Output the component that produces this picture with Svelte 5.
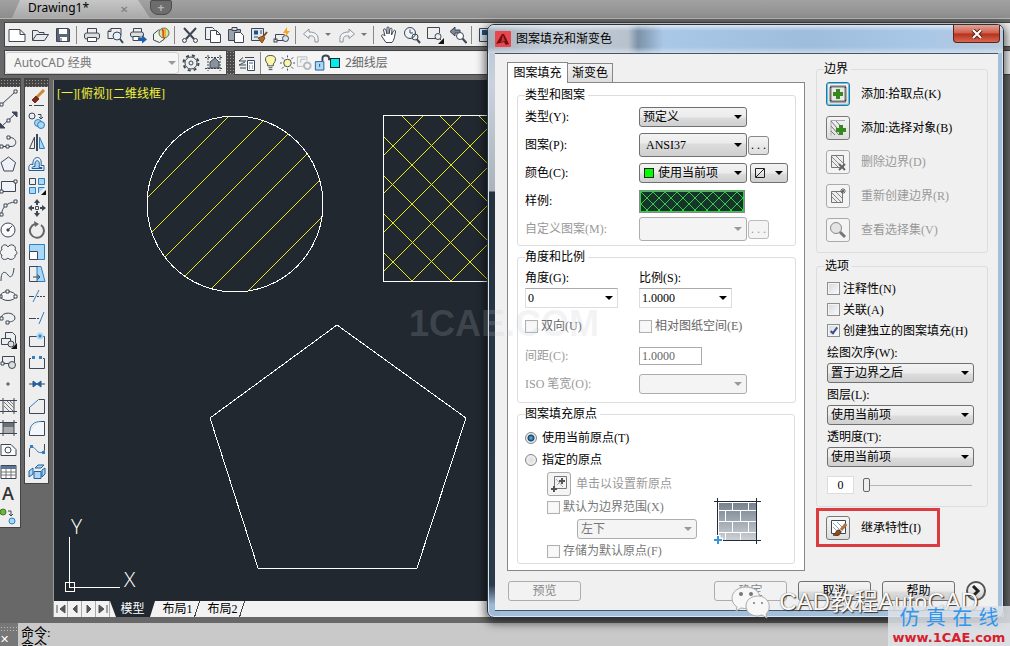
<script lang="ts">
  type Tool = { name: string; art: string };

  const B = '#2f7fc1';
  const L = '#a9d8f5';

  // Inner markup of the 18x18 toolbar glyphs.
  const standard: (Tool | 'sep' | 'arrow')[] = [
    { name: 'New', art: '<path d="M1 3.5h11l5 5v7H1zM12 3.5v5h5" fill="#fff"/>' },
    { name: 'Open', art: '<path d="M1.500 14V4.500h5l1.500 2h5v2M1.500 14.500l4-6h12l-4 6z" fill="#e8eaec"/>' },
    { name: 'Save', art: '<path d="M2.500 2.500h12l1 1v12h-13z" fill="#5b6675"/><path d="M5 3h8v5H5zM6 11h7v4H6z" fill="#fff" stroke="none"/><path d="M7 12v3"/>' },
    'sep',
    { name: 'Plot', art: '<path d="M4.500 7V2.500h9V7"/><rect x="1.500" y="7" width="15" height="6" rx="2" fill="#ddd"/><path d="M4.500 11.500h9v4h-9z" fill="#fff"/>' },
    { name: 'Plot preview', art: '<path d="M15 9V2.500H5l-3 3v7h5M2 5.500h3v-3"/><circle cx="11" cy="10" r="4" fill="#e4f1fb"/><path d="M14 13l3 4" stroke-width="2"/>' },
    { name: 'Publish', art: '<path d="M4.500 6V2.500h8V6"/><rect x="1.500" y="6" width="13" height="5" rx="2" fill="#ddd"/><path d="M4 10.500h6v4H4z" fill="#fff"/><path d="M9 12h4V9l5 4.500-5 4V15H9z" fill="#1c5fa8" stroke="none"/>' },
    { name: '3DDWF', art: '<path d="M1.500 8l5-4 6 1v8l-5 3.500-6-2.500z" fill="#eef5e8"/><circle cx="12" cy="7" r="5" fill="#cfe6a8" stroke="#5c7a40"/><path d="M10 3c3 3 0 5 2 9" stroke="#e04a2a" stroke-width="2"/><path d="M13 3v8" stroke="#f2b32c" stroke-width="2"/>' },
    'sep',
    { name: 'Cut', art: '<path d="M3 2l10 11M15 2L5 13" stroke-width="2"/><circle cx="3.500" cy="14.500" r="2"/><circle cx="14.500" cy="14.500" r="2"/>' },
    { name: 'Copy', art: '<path d="M6 13.500H1.500v-12h7l2 2"/><path d="M6.500 4.500h6l4 4v8h-10zM12.500 4.500v4h4" fill="#fff"/>' },
    { name: 'Paste', art: '<path d="M1.500 3.500h12v11h-12z" fill="#9aa3ad"/><path d="M5 1.500h5v3H5z" fill="#ddd"/><path d="M7.500 6.500h6l3 3v7h-9z" fill="#fff"/>' },
    { name: 'Match properties', art: '<path d="M1.500 2.500h12v12h-12z" fill="#dce9f5"/><path d="M4 4.500h4v4H4z" fill="#24507e" stroke="none"/><path d="M10 5h2M10 7h2M4 11h4"/><path d="M17 6l-4 5" stroke="#7a4a20" stroke-width="2"/><path d="M8 12l5-2 2 2-3 5z" fill="#b06a24" stroke="#7a4a20"/>' },
    { name: 'Block editor', art: '<path d="M2.500 14V8.500h9M4 14.500h6"/><rect x="1" y="13" width="3" height="3"/><circle cx="12.500" cy="12.500" r="3" fill="#dbe4f5"/><path d="M14 1l-4 6h3l-1 4 5-6h-3z" fill="#f6a31c" stroke="none"/>' },
    'sep',
    { name: 'Undo', art: '<path d="M7 3L1.500 8 7 12.500V10c4-.500 6 0 6 6h3c1-7-2-10-9-10z" stroke="#8c939b" fill="#f4f4f4"/>' },
    'arrow',
    { name: 'Redo', art: '<path d="M11 3l5.500 5-5.500 4.500V10c-4-.500-6 0-6 6H2C1 9 4 6 11 6z" stroke="#8c939b" fill="#f4f4f4"/>' },
    'arrow',
    'sep',
    { name: 'Pan', art: '<path d="M6 16.500L1.500 10c0-2 2-1.500 3.500 0L3.500 4c0-1.500 2-1.500 2.500 0l1 4V2c0-1.500 2-1.500 2 0v6l1-5c.500-1.500 2-1 2 .500L11.500 9l2-4c1-1.500 2.500-.500 2 1-1 4-1 8-3.500 10.500z" fill="#fff"/>' },
    { name: 'Zoom realtime', art: '<circle cx="7" cy="7" r="5.500" fill="#eef4f9"/><path d="M7 3.500V7h3"/><circle cx="12" cy="11" r="3"/><path d="M14 13.500l3 3.500" stroke-width="2"/>' },
    { name: 'Zoom window', art: '<path d="M10 12.500H1.500v-11h12V7"/><circle cx="12" cy="10.500" r="3"/><path d="M14 13l1 1"/><path d="M18 12v6h-6z" fill="#111" stroke="none"/>' },
    { name: 'Zoom previous', art: '<path d="M6 1L1 5.500 6 10V7h5V4H6z" fill="#7c8794"/><circle cx="11" cy="10" r="3.500" fill="#fff"/><path d="M13.500 12.500l4 4.500" stroke-width="2"/>' },
    'sep',
    { name: 'Properties', art: '<path d="M1.500 2.500h15v13h-15z" fill="#dce9f5"/><path d="M4 4h5v5H4z" fill="#24507e" stroke="none"/>' },
  ];

  const draw: Tool[] = [
    { name: 'Line', art: '<path d="M2 15L15 3"/><path d="M0 14h3v3H0zM14 1h3v3h-3z" fill="#fff"/>' },
    { name: 'Construction line', art: '<path d="M1 16L16 2"/><path d="M0 17v-5l5 5zM17 1v5l-5-5z" fill="#3c4654"/><path d="M7 8h3v3H7z" fill="#fff"/>' },
    { name: 'Polyline', art: '<path d="M1 13.500h10c7 0 6-9-1-9H7"/><path d="M0 12h3v3H0zM6 12h3v3H6zM7 3h3v3H7z" fill="#fff"/>' },
    { name: 'Polygon', art: '<path d="M8.500 2l7 5.500-2.500 8.500h-9L1 7.500z" fill="#eef2f8"/>' },
    { name: 'Rectangle', art: '<path d="M1.500 4.500h14v10h-14z" fill="#f0f3f6"/><path d="M0 13h3v3H0zM14 3h3v3h-3z" fill="#fff"/>' },
    { name: 'Arc', art: '<path d="M1.500 15.500C2 8 7 3.500 15.500 3"/><path d="M0 14h3v3H0zM4 5h3v3H4zM14 1h3v3h-3z" fill="#fff"/>' },
    { name: 'Circle', art: '<circle cx="8" cy="9" r="7" fill="#fafafa"/><path d="M8 9l4-4"/><path d="M7 8h2v2H7z" fill="#3c4654"/>' },
    { name: 'Revision cloud', art: '<path d="M8 4c2-4 9-2 7 3 3 2 2 5 0 5 1 4-5 6-7 3-3 3-8 1-6-3-3-1-2-5 0-5-2-5 4-7 6-3z" fill="#f3f3f3"/>' },
    { name: 'Spline', art: '<path d="M1 16c0-12 5-9 7-6s5 3 6-7"/>' },
    { name: 'Ellipse', art: '<ellipse cx="8" cy="9" rx="7.500" ry="4.500" fill="#f5f5f5"/><path d="M6 3h3v3H6zM0 8h2v3H0zM14 8h3v3h-3z" fill="#fff"/>' },
    { name: 'Ellipse arc', art: '<path d="M1 9C2 2 15 3 15 9c0 3-4 4-7 4"/><path d="M0 8h3v3H0zM6 12h3v3H6z" fill="#fff"/>' },
    { name: 'Insert block', art: '<path d="M5.500 8V1.500h7l3 3v8"/><path d="M1.500 7.500h9v6h-9z"/><circle cx="11" cy="13" r="3" fill="#ddd"/><path d="M17 12v6h-6z" fill="#111" stroke="none"/>' },
    { name: 'Make block', art: '<path d="M2.500 3.500h12v7h-12z"/><path d="M1 9h3v3H1z" fill="#fff"/><circle cx="12" cy="12" r="3.500" fill="#ddd"/>' },
    { name: 'Point', art: '<path d="M7 8h2v2H7z"/>' },
    { name: 'Hatch', art: '<path d="M3 1v16M14 1v16M0 3.500h17M0 14.500h17"/><path d="M4 5l9 9M4 9l5 5M7 4l7 7M10 4l4 4" stroke="#777"/>' },
    { name: 'Gradient', art: '<path d="M3 4h11v10H3z" fill="#a8acb0" stroke="none"/><path d="M3 4h11v4H3z" fill="#6c7176" stroke="none"/><path d="M3 1v16M14 1v16M0 3.500h17M0 14.500h17"/>' },
    { name: 'Region', art: '<path d="M1 3.500h10l5 5v6H1z" fill="#fafafa"/><circle cx="8" cy="9" r="3"/>' },
    { name: 'Table', art: '<path d="M1 2.500h15v13H1z" fill="#fff"/><path d="M1 3h15v3H1z" fill="#5c7795" stroke="none"/><path d="M6 6v9M11 6v9M1 9h15M1 12h15" stroke="#777"/>' },
    { name: 'Multiline text', art: '<text x="2" y="15" font-size="18" font-family="Open Sans" font-weight="600" fill="#333" stroke="none">A</text>' },
    { name: 'Add selected', art: '<circle cx="3" cy="5" r="3" fill="#6fb440" stroke="#3f7a22"/><path d="M8 4h3v4M9 7l2 2 2-2"/><circle cx="12" cy="14" r="3" fill="#a9d8f5" stroke="#2f7fc1"/>' },
  ];

  const modify: Tool[] = [
    { name: 'Erase', art: `<path d="M16 1l-7 7" stroke="#c98a3a" stroke-width="3"/><path d="M4 11l4-4 3 3-4 4z" fill="#7a2c1c" stroke="#7a2c1c"/><path d="M1 16.500h3M6 16.500h10"/>` },
    { name: 'Copy', art: `<circle cx="4" cy="5" r="3"/><path d="M10 3.500h3v4M11 6l2 2 2-2"/><circle cx="10" cy="12" r="3.500" fill="${L}" stroke="${B}"/><circle cx="13" cy="14" r="3.500" fill="${L}" stroke="${B}"/>` },
    { name: 'Mirror', art: `<path d="M6.500 4v11.500h-5z"/><path d="M9 1v17" stroke-width="2"/><path d="M11.500 4v11.500h5z" fill="${L}" stroke="${B}"/>` },
    { name: 'Offset', art: `<path d="M1 15.500h15v-5h-3c2-11-9-10-8-1-3-1-5 1-4 6z" stroke="#235f9c"/><path d="M4 13.500h10v-1h-3c2-9-5-9-4-1-2 0-3 0-3 2z" fill="${L}" stroke="#235f9c"/>` },
    { name: 'Array', art: `<path d="M1.500 1.500h6v6h-6z"/><path d="M10.500 1.500h6v6h-6zM1.500 10.500h6v6h-6zM10.500 16v-5.500h6" fill="${L}" stroke="${B}"/><path d="M18 13v5h-5z" fill="#111" stroke="none"/>` },
    { name: 'Move', art: '<path d="M9 0l3 4H6zM9 18l3-4H6zM0 9l4-3v6zM18 9l-4-3v6z" fill="#3c4654" stroke="none"/><path d="M9 3v3M9 12v3M3 9h3M12 9h3" stroke-width="2"/><path d="M7.500 7.500h3v3h-3z"/>' },
    { name: 'Rotate', art: '<path d="M13 4a7 7 0 1 1-6-1" stroke="#666" stroke-width="2"/><path d="M6 0l5 3-4 3z" fill="#666" stroke="none"/>' },
    { name: 'Scale', art: `<path d="M1.500 1.500h15v15h-15z" fill="${L}" stroke="${B}"/><path d="M1.500 8.500h8v8h-8z" fill="#fff"/>` },
    { name: 'Stretch', art: `<path d="M9 1.500h4l4 15H9z" fill="${L}" stroke="${B}"/><path d="M10 1.500H1.500v15H10M5 12h6M9 9.500l3 2.500-3 2.500"/>` },
    { name: 'Trim', art: `<path d="M1 9.500h5"/><path d="M9 9.500h8" stroke-dasharray="2 1"/><path d="M5 15l6-12" stroke="${B}"/>` },
    { name: 'Extend', art: `<path d="M1 9.500h5"/><path d="M6 9.500h6" stroke-dasharray="2 1"/><path d="M11 15l5-12" stroke="${B}"/>` },
    { name: 'Break at point', art: `<path d="M10 5.500H1.500v10h15v-10H15"/><circle cx="12" cy="5" r="3.500" fill="${L}" stroke="none"/><circle cx="12" cy="5" r="1.500" fill="${B}" stroke="none"/>` },
    { name: 'Break', art: `<path d="M3 5.500H1.500v10h15v-10H15"/><path d="M4 3h3v3H4zM11 3h3v3h-3z" fill="${B}" stroke="none"/>` },
    { name: 'Join', art: '<path d="M1 9h5M12 9h5"/><path d="M5 6l4 3-4 3zM13 6L9 9l4 3z" fill="#235f9c" stroke="#235f9c"/>' },
    { name: 'Chamfer', art: `<path d="M1.500 10v6.500h15v-14h-6"/><path d="M2 10l8-7" stroke="${B}"/>` },
    { name: 'Fillet', art: `<path d="M1.500 12v4.500h15v-14H13" fill="#f2f7fb"/><path d="M2 12C2 6 6 2.500 13 2.500" stroke="${B}"/>` },
    { name: 'Blend curves', art: `<path d="M1.500 16V9c0-3 2-3 2-3M16.500 3v6l-2 3"/><path d="M4 6c4 0 5 8 11 5" stroke="${B}"/><path d="M2 4h3v3H2zM14 10h3v3h-3z" fill="${B}" stroke="none"/>` },
    { name: 'Explode', art: `<path d="M6 8.500h7v7H6zM1 8l4-3v6l-4 3zM7 5l3-3h6l-3 3zM14 7l3-2v6l-3 3z" fill="${L}" stroke="#235f9c"/>` },
  ];

  const boundary = [
    { label: '添加:拾取点(K)', on: true, focus: true, art: '<path d="M1.500 1.500h15v15h-15z" stroke="#000" stroke-width="2" stroke-dasharray="1 1" fill="#e8e8e8"/><path d="M7 4h4v3h3v4h-3v3H7v-3H4V7h3z" fill="#37891f" stroke="none"/>' },
    { label: '添加:选择对象(B)', on: true, focus: false, art: '<path d="M2 16.500V1.500h14" stroke="#aaa"/><path d="M2 2l12 14M2 7l8 9M7 2l9 10M2 12l4 4" stroke="#777"/><path d="M10 6h4v3h3v4h-3v3h-4v-3H7V9h3z" fill="#37891f" stroke="none"/>' },
    { label: '删除边界(D)', on: false, focus: false, art: '<path d="M2.500 2.500h12v12h-12z" fill="#eee" stroke="#777"/><path d="M3 4l10 10M3 8l6 6M7 3l7 7" stroke="#888"/><path d="M10 11l6 6M16 11l-6 6" stroke="#666" stroke-width="2"/>' },
    { label: '重新创建边界(R)', on: false, focus: false, art: '<path d="M2.500 4.500h11v11h-11z" fill="#eee" stroke="#777"/><path d="M3 6l9 9M3 10l5 5M7 5l6 6" stroke="#888"/><path d="M14 1v6M11 4h6M12 2l4 4M16 2l-4 4" stroke="#666" stroke-width="1"/>' },
    { label: '查看选择集(V)', on: false, focus: false, art: '<circle cx="7" cy="7" r="5.500" fill="#e4e4e4" stroke="#888" stroke-width="1"/><path d="M11 11l5 5" stroke="#777" stroke-width="3"/>' },
  ];

  // 45° hatch intercepts, shared by the circle and the square.
  const hatch = [0, 1, 2, 3, 4, 5, 6, 7, 8, 9, 10].map((k) => Math.round(345 + k * 38.7));
  const backHatch = [-4, -3, -2, -1, 0, 1, 2, 3].map((k) => Math.round(247 + k * 38.7));

  let separate = $state(true);
  let annotative = $state(false);
  let associative = $state(false);
  let origin = $state('current');
  let transparency = $state(0);
</script>

{#snippet glyph(art: string)}
  <svg class="glyph" width="18" height="18" viewBox="0 0 18 18" aria-hidden="true">{@html art}</svg>
{/snippet}

{#snippet drop(label: string, value: string, cls: string, disabled = false)}
  <span class="drop {cls}" class:off={disabled}>
    <select aria-label={label} {disabled}><option>{value}</option></select>
  </span>
{/snippet}

<div class="app">
  <header class="doc-tabs">
    <div class="doc-tab"><span>Drawing1*</span><button aria-label="Close drawing">✕</button></div>
    <button class="new-tab" aria-label="New drawing">+</button>
  </header>

  <div class="bar">
    {#each standard as t}
      {#if t === 'sep'}
        <i class="sep"></i>
      {:else if t === 'arrow'}
        <i class="mini-arrow"></i>
      {:else}
        <button class="tool" aria-label={t.name}>{@render glyph(t.art)}</button>
      {/if}
    {/each}
  </div>

  <div class="bars">
    <div class="bar workspace-bar">
      {@render drop('Workspace', 'AutoCAD 经典', 'ws')}
      <button class="tool" aria-label="Workspace settings">
        {@render glyph('<circle cx="9" cy="9" r="6"/><circle cx="9" cy="9" r="2"/><circle cx="9" cy="9" r="7.500" stroke-width="2" stroke-dasharray="3 3"/>')}
      </button>
      <button class="tool" aria-label="My workspace">
        {@render glyph('<path d="M3 1v16M15 1v16M0 3.500h18M0 14.500h18" stroke-dasharray="2 1"/><path d="M5 14V8l5-4 4 4v6z" fill="#8a929b"/>')}
      </button>
    </div>
    <i class="v-grip"></i>
    <div class="bar layer-bar">
      <button class="tool" aria-label="Layer properties">
        {@render glyph('<path d="M7 3.500h9M5 3.500L1 7h7M7 8L1 11h7M8 14H2"/><path d="M9.500 6.500h7v10h-7z" fill="#fff"/><path d="M11 9h4M11 12h1M14 12h1M11 14h1M14 14h1" stroke="#235f9c"/>')}
      </button>
      <div class="layer">
        {@render glyph('<path d="M9 1c-7 0-6 6-3 9v2h6v-2c3-3 4-9-3-9z" fill="#fdf6a6"/><path d="M7 14h4M7 16h4"/>')}
        {@render glyph('<circle cx="9" cy="9" r="4" fill="#fdf6a6"/><path d="M9 1v2M9 15v2M1 9h2M15 9h2M3 3l2 2M13 13l2 2M3 15l2-2M13 5l2-2"/>')}
        {@render glyph('<g stroke="#b5b9bd"><path d="M8 12.500H1.500v-10h10v4M5 9V5h5"/><circle cx="12" cy="12" r="3.500" stroke-width="2"/></g>')}
        {@render glyph('<path d="M10 7V4c0-4 7-4 7 0v2" stroke-width="2"/><path d="M2.500 7.500h9v9h-9z" fill="#a9d8f5" stroke="#235f9c"/><path d="M7 10v3"/>')}
        <i class="cyan"></i>
        <span>2细线层</span>
      </div>
    </div>
  </div>

  <main class="work">
    <div class="palette draw">
      <i class="grip"></i>
      {#each draw as t}<button class="tool" aria-label={t.name}>{@render glyph(t.art)}</button>{/each}
    </div>
    <div class="palette modify">
      <i class="grip"></i>
      {#each modify as t}<button class="tool" aria-label={t.name}>{@render glyph(t.art)}</button>{/each}
    </div>

    <section class="view">
      <svg class="model" aria-label="Model space">
        <defs>
          <clipPath id="disc"><circle cx="235" cy="204" r="88" /></clipPath>
          <clipPath id="square"><rect x="383" y="115" width="167" height="167" /></clipPath>
        </defs>
        <g transform="translate(-54 -80)">
          <g clip-path="url(#disc)">
            {#each hatch as c}<path class="hatch" d="M{c - 320} 320l220-220" />{/each}
          </g>
          <g clip-path="url(#square)">
            {#each hatch as c}<path class="hatch" d="M{c - 320} 320l220-220" />{/each}
            {#each backHatch as d}<path class="hatch" d="M{d + 100} 100l220 220" />{/each}
          </g>
          <g class="outline">
            <circle cx="235" cy="204" r="88" />
            <rect x="383" y="115" width="167" height="166" />
            <path d="M337 325l129 93-49 150H258l-48-150z" />
            <path d="M69 537v50h51M65 582h9v9h-9z" />
          </g>
        </g>
        <g transform="translate(-54 -80)" class="axes">
          <text x="71" y="534">Y</text>
          <text x="124" y="587">X</text>
          <text class="viewname" x="57" y="98">[一][俯视][二维线框]</text>
        </g>
      </svg>
      <nav class="layouts">
        <button aria-label="First"><svg width="12" height="12"><path d="M2 2v8M10 2L5 6l5 4z" /></svg></button>
        <button aria-label="Previous"><svg width="12" height="12"><path d="M8 2L4 6l4 4z" /></svg></button>
        <button aria-label="Next"><svg width="12" height="12"><path d="M4 2l4 4-4 4z" /></svg></button>
        <button aria-label="Last"><svg width="12" height="12"><path d="M2 2l5 4-5 4zM10 2v8" /></svg></button>
        <a href="#model" class="current">模型</a>
        <a href="#layout1">布局1</a>
        <a href="#layout2">布局2</a>
      </nav>
    </section>
  </main>

  <footer class="command">
    <div class="command-side"><i></i><span>✕</span></div>
    <div class="command-text">
      <div>命令:</div>
      <div>命令</div>
    </div>
  </footer>

  <div class="dialog" role="dialog" aria-labelledby="dialog-title">
    <div class="title">
      <svg width="16" height="16" viewBox="0 0 16 16" aria-hidden="true">
        <rect width="16" height="16" rx="1" fill="#e8474c" />
        <path d="M1 13l6-10h2l5 10-3 1-2-3-4 1z" fill="#6d0f14" />
        <path d="M8 4l2 6-4 1z" fill="#c9343a" />
      </svg>
      <h1 id="dialog-title">图案填充和渐变色</h1>
      <button class="close" aria-label="Close">
        <svg width="12" height="10" viewBox="0 0 12 10"><path d="M2 1l8 8M10 1L2 9" stroke="#5a2020" stroke-width="4" /><path d="M2 1l8 8M10 1L2 9" stroke="#fff" stroke-width="2" /></svg>
      </button>
    </div>

    <div class="body">
      <div class="columns">
        <div class="left">
          <div class="tabs" role="tablist">
            <button role="tab" class="active" aria-selected="true">图案填充</button>
            <button role="tab" aria-selected="false">渐变色</button>
          </div>
          <div class="panel">
            <fieldset class="kind">
              <legend>类型和图案</legend>
              <div class="row"><span>类型(Y):</span>{@render drop('类型', '预定义', 'w108')}</div>
              <div class="row">
                <span>图案(P):</span>{@render drop('图案', 'ANSI37', 'w108 tall')}<button class="dots" aria-label="Browse patterns">. . .</button>
              </div>
              <div class="row">
                <span>颜色(C):</span>{@render drop('颜色', '使用当前项', 'w108 color')}
                <span class="drop bg-color"><select aria-label="背景色"><option></option></select>
                  <svg width="10" height="10" aria-hidden="true"><path d="M.5.5h9v9h-9zM1 9l8-8" fill="none" stroke="#222" /></svg>
                </span>
              </div>
              <div class="row">
                <span>样例:</span>
                <button class="sample" aria-label="样例">
                  <svg width="100%" height="100%">
                    <defs>
                      <pattern id="net" width="12" height="12" patternUnits="userSpaceOnUse">
                        <path d="M0 0l12 12M12 0L0 12" stroke="#2fd044" />
                      </pattern>
                    </defs>
                    <rect width="100%" height="100%" fill="url(#net)" />
                  </svg>
                </button>
              </div>
              <div class="row dim">
                <span>自定义图案(M):</span>{@render drop('自定义图案', '', 'w108 tall', true)}<button class="dots" aria-label="Browse custom patterns" disabled>. . .</button>
              </div>
            </fieldset>

            <fieldset class="scale">
              <legend>角度和比例</legend>
              <div class="row r20"><span>角度(G):</span><span>比例(S):</span></div>
              <div class="row r20">
                <span>{@render drop('角度', '0', 'edit')}</span>{@render drop('比例', '1.0000', 'edit')}
              </div>
              <div class="row r36 grey">
                <span><label><input type="checkbox" disabled />双向(U)</label></span>
                <label><input type="checkbox" disabled />相对图纸空间(E)</label>
              </div>
              <div class="row r24 dim">
                <label for="spacing">间距(C):</label><input id="spacing" class="spacing" value="1.0000" disabled />
              </div>
              <div class="row r32 dim"><span>ISO 笔宽(O):</span>{@render drop('ISO 笔宽', '', 'w108', true)}</div>
            </fieldset>

            <fieldset class="origin">
              <legend>图案填充原点</legend>
              <label class="radio"><input type="radio" value="current" bind:group={origin} />使用当前原点(T)</label>
              <label class="radio"><input type="radio" value="given" bind:group={origin} />指定的原点</label>
              <div class="given">
                <div>
                  <div class="pick">
                    <button class="square" aria-label="单击以设置新原点" disabled>
                      {@render glyph('<path d="M4.500 1.500h12v12h-12z" stroke="#777"/><path d="M6 4l7 8M7 10l6-6" stroke="#aaa"/><path d="M12 3v6M9 6h6M4 11v6M1 14h6" stroke="#555" stroke-width="2"/>')}
                    </button>
                    单击以设置新原点
                  </div>
                  <label class="check"><input type="checkbox" disabled />默认为边界范围(X)</label>
                  {@render drop('边界范围', '左下', 'corner', true)}
                  <label class="check"><input type="checkbox" disabled />存储为默认原点(F)</label>
                </div>
                <svg class="bricks" width="50" height="50" viewBox="0 0 50 50" aria-hidden="true">
                  <defs>
                    <linearGradient id="wall" x2="0" y2="1"><stop stop-color="#76828e" /><stop offset="1" stop-color="#ccd0d6" /></linearGradient>
                  </defs>
                  <path d="M6 7h37v37H6z" fill="url(#wall)" />
                  <path d="M6 14.500h37M6 25.500h37M6 36.500h37M19.500 7v7M35.500 7v7M12.500 15v10M27.500 15v10M19.500 26v10M35.500 26v10M12.500 37v7M27.500 37v7" stroke="#fff" />
                  <path d="M1 5.500h47M1 44.500h47M4.500 2v46M43.500 2v46" stroke="#222c38" />
                  <path d="M0 44h10M5 39v10" stroke="#fff" stroke-width="5" />
                  <path d="M1 44h8M5 40v8" stroke="#3a94dc" stroke-width="2" />
                </svg>
              </div>
            </fieldset>
          </div>
        </div>

        <div class="right">
          <fieldset class="bounds">
            <legend>边界</legend>
            {#each boundary as b}
              <div class="action" class:dim={!b.on}>
                <button class="square" class:focus={b.focus} aria-label={b.label} disabled={!b.on}>{@render glyph(b.art)}</button>
                <span>{b.label}</span>
              </div>
            {/each}
          </fieldset>

          <fieldset class="options">
            <legend>选项</legend>
            <label class="opt"><input type="checkbox" bind:checked={annotative} />注释性(N)</label>
            <label class="opt"><input type="checkbox" bind:checked={associative} />关联(A)</label>
            <label class="opt"><input type="checkbox" bind:checked={separate} />创建独立的图案填充(H)</label>
            <div class="caption">绘图次序(W):</div>
            {@render drop('绘图次序', '置于边界之后', 'wide')}
            <div class="caption">图层(L):</div>
            {@render drop('图层', '使用当前项', 'wide')}
            <div class="caption">透明度(T):</div>
            {@render drop('透明度', '使用当前项', 'wide')}
            <div class="transparency">
              <input class="amount" aria-label="透明度值" bind:value={transparency} />
              <input type="range" aria-label="透明度滑块" min="0" max="90" bind:value={transparency} />
            </div>
          </fieldset>

          <div class="inherit">
            <button class="square" aria-label="继承特性">
              {@render glyph('<path d="M2.500 1.500h14v13h-14z" fill="#fff"/><path d="M4 4l9 9M4 8l5 5M8 3l7 7" stroke="#8fa3bd"/><path d="M17 5l-5 6" stroke="#b5713c" stroke-width="3"/><path d="M4 16c3 0 2-5 6-5l2 2c-1 4-4 4-8 3z" fill="#8a4a22" stroke="#6b3413"/>')}
            </button>
            <span>继承特性(I)</span>
          </div>
        </div>
      </div>

      <div class="actions">
        <button class="push preview" disabled>预览</button>
        <button class="push" disabled>确定</button>
        <button class="push">取消</button>
        <button class="push">帮助</button>
        <button class="more" aria-label="More options">
          <svg width="10" height="12" viewBox="0 0 10 12"><path d="M2 1l5 5-5 5" fill="none" stroke="#222" stroke-width="3" /></svg>
        </button>
      </div>
    </div>
  </div>

  <div class="faint-mark">1CAE.COM</div>
  <div class="channel">
    <svg width="40" height="34" viewBox="0 0 40 34" aria-hidden="true">
      <g fill="#f7f7f7" stroke="#aaa">
        <path d="M15 2C7 2 1 7 1 13c0 4 2 7 5 9l-1 4 5-3c10 2 19-2 19-10C29 7 23 2 15 2z" />
        <path d="M27 11c-7 0-12 4-12 10s5 10 12 10l4-1 5 3-1-4c7-7 2-18-8-18z" />
      </g>
      <g fill="#777"><circle cx="10" cy="9" r="2" /><circle cx="20" cy="9" r="2" /><circle cx="23" cy="18" r="1" /><circle cx="31" cy="18" r="1" /></g>
    </svg>
    <span>CAD教程AutoCAD</span>
  </div>
  <div class="site">
    <b>仿 真 在 线</b>
    <a href="#site">www.1CAE.com</a>
  </div>
</div>

<style>
  :global(body) {
    margin: 0;
  }
  .app {
    position: relative;
    display: flex;
    flex-direction: column;
    height: 100vh;
    overflow: hidden;
    background: #686868;
    color: #000;
    font: 12px/16px 'Liberation Serif', 'Noto Sans CJK SC', serif;
  }
  .app :is(button, input, select) {
    box-sizing: border-box;
    margin: 0;
    padding: 0;
    font: inherit;
    color: inherit;
  }
  .app button {
    border: 0;
    background: none;
  }
  .app *,
  .app *::after {
    box-sizing: border-box;
  }
  .glyph {
    flex: none;
    fill: none;
    stroke: #3c4654;
  }

  /* document tabs */
  .doc-tabs {
    flex: none;
    display: flex;
    height: 19px;
    margin-bottom: 4px;
    background: linear-gradient(#a2a2a2, #8d8d8d);
    border-bottom: 1px solid #b5b5b5;
    font-family: 'Noto Sans', sans-serif;
  }
  .doc-tab {
    display: flex;
    justify-content: space-between;
    width: 138px;
    margin-left: 12px;
    padding: 0 12px 0 16px;
    line-height: 16px;
    background: linear-gradient(#c6c6c6, #a9a9a9);
    clip-path: polygon(8px 0, 126px 0, 100% 100%, 0 100%);
  }
  .doc-tab button {
    margin-right: 10px;
    color: #777;
    font-size: 10px;
    line-height: 12px;
  }
  .doc-tabs .new-tab {
    width: 22px;
    height: 15px;
    background: #6d6d6d;
    border: 1px solid #4d4d4d;
    border-radius: 2px 2px 8px 8px;
    color: #b5b5b5;
    line-height: 12px;
    font-weight: 700;
  }

  /* horizontal toolbars */
  .bar {
    flex: none;
    display: flex;
    align-items: center;
    height: 23px;
    margin-left: 5px;
    background: #eee;
    box-shadow: 0 0 0 1px #444;
  }
  .bar .tool {
    flex: none;
    width: 23px;
    height: 23px;
  }
  .tool {
    display: grid;
    place-items: center;
  }
  .sep {
    flex: none;
    width: 1px;
    height: 18px;
    margin: 0 3px 0 2px;
    background: #888;
  }
  .mini-arrow {
    flex: none;
    margin: 0 4px 0 3px;
    border: 3px solid transparent;
    border-top-color: #777;
    border-bottom: 0;
  }
  .bars {
    flex: none;
    display: flex;
    margin: 5px 0;
  }
  .workspace-bar {
    width: 221px;
  }
  .v-grip {
    width: 9px;
    background: radial-gradient(#999 1px, #4a4a4a 1px) 0 0 / 3px 3px;
  }
  .layer-bar {
    flex: 1;
    margin-left: 0;
  }
  .layer {
    flex: 1;
    display: flex;
    align-items: center;
    height: 22px;
    margin-left: 2px;
    padding-left: 1px;
    background: #f5f5f5;
    border-left: 1px solid #888;
    color: #666;
    font-family: 'Noto Sans', 'Noto Sans CJK SC', sans-serif;
  }
  .layer .glyph {
    width: 17px;
  }
  .cyan {
    width: 10px;
    height: 10px;
    margin-right: 5px;
    background: #0ee;
    border: 1px solid #222;
  }

  /* drawing area */
  .work {
    flex: 1;
    min-height: 0;
    display: flex;
    align-items: flex-start;
    padding-right: 6px;
  }
  .palette {
    display: flex;
    flex-direction: column;
    background: #eee;
    box-shadow: 0 0 0 1px #444;
  }
  .palette.draw {
    width: 20px;
    margin-right: 5px;
  }
  .palette.modify {
    width: 23px;
    margin-right: 5px;
  }
  .palette .tool {
    height: 22px;
  }
  .draw .tool {
    width: 17px;
    justify-content: start;
  }
  .grip {
    height: 8px;
    background: radial-gradient(#999 1px, #444 1px) 0 0 / 3px 3px;
  }
  .view {
    flex: 1;
    align-self: stretch;
    display: flex;
    flex-direction: column;
    margin: 1px 0 6px;
    border-left: 1px solid #999;
    background: #212830;
  }
  .model {
    flex: 1;
    width: 100%;
    min-height: 0;
  }
  .hatch {
    fill: none;
    stroke: #e6e61e;
  }
  .outline {
    fill: none;
    stroke: #fff;
    shape-rendering: crispEdges;
  }
  .axes text {
    fill: #fff;
    font-family: 'Open Sans', sans-serif;
    font-weight: 300;
    font-size: 21px;
  }
  .axes .viewname {
    fill: #f2f23a;
    font: 12px 'Liberation Serif', 'Noto Sans CJK SC', serif;
  }
  .layouts {
    display: flex;
    height: 16px;
    background: #f2f2f2;
    line-height: 16px;
  }
  .layouts button {
    display: grid;
    place-items: center;
    width: 14px;
    border-right: 1px solid #aaa;
  }
  .layouts svg {
    fill: #555;
    stroke: #555;
  }
  .layouts a {
    width: 45px;
    text-align: center;
    color: #000;
    text-decoration: none;
    background: linear-gradient(108deg, transparent 42px, #444 42px, #444 43px, transparent 43px);
  }
  .layouts a.current {
    background: #212830;
    color: #fff;
    clip-path: polygon(0 0, 100% 0, 40px 100%, 6px 100%);
  }

  .command {
    flex: none;
    display: flex;
    height: 23px;
    overflow: hidden;
    background: #c9c9c9;
    font-size: 13px;
  }
  .command-side {
    width: 18px;
    padding-top: 3px;
    background: #777;
    color: #fff;
    font-size: 11px;
    line-height: 12px;
  }
  .command-side i {
    display: block;
    height: 7px;
    background: radial-gradient(#bbb 1px, #777 1px) 0 0 / 3px 3px;
  }
  .command-text {
    padding: 3px;
    line-height: 13px;
  }

  /* dialog window */
  .dialog {
    position: absolute;
    top: 24px;
    right: 6px;
    width: 517px;
    padding: 0 5px 6px 7px;
    border: 1px solid #2a333d;
    border-radius: 7px;
    background: linear-gradient(90deg, transparent 12px, #a3bfda 12px),
      linear-gradient(#b4c3d3 0, #c9d2dc 60px, #aab2bb 166px, #26323e 167px, #2c3b4a 560px, #9dbbd9 580px);
    box-shadow: inset 0 0 0 1px #dbe6f0, 0 3px 10px 2px rgba(0, 0, 0, 0.6);
  }
  .title {
    display: flex;
    align-items: center;
    height: 28px;
    margin: 0 -5px 0 -7px;
    padding-left: 7px;
    border-radius: 6px 6px 0 0;
    background: linear-gradient(rgba(240, 246, 252, 0.7), transparent 6px, transparent 22px, rgba(220, 230, 240, 0.7)),
      linear-gradient(90deg, #a4b0bd, #c3ccd5 60px, #b8c2cd 140px, #7d92a8 150px, #8ca6c1 160px, #a9c7e6 175px, #9ebcdb 320px, #a9c7e6 440px, #b9cbdc);
  }
  .title h1 {
    flex: 1;
    margin: 0 0 2px 5px;
    font: 12px/16px 'Noto Sans CJK SC', sans-serif;
  }
  .title .close {
    align-self: flex-start;
    display: grid;
    place-items: center;
    width: 47px;
    height: 18px;
    margin-right: 3px;
    border: 1px solid #5b2320;
    border-top: 0;
    border-radius: 0 0 4px 4px;
    background: linear-gradient(#e3a295, #cf5f4c 8px, #b5301c 9px, #d8694e);
  }
  .body {
    display: flex;
    flex-direction: column;
    padding: 7px 10px 9px 12px;
    background: #f0f0f0;
    border: 1px solid #44566a;
    border-width: 1px 0;
  }
  .columns {
    display: flex;
    gap: 11px;
  }
  .left {
    width: 298px;
  }
  .right {
    flex: 1;
    display: flex;
    flex-direction: column;
  }
  .tabs {
    display: flex;
    align-items: flex-end;
    height: 21px;
  }
  .tabs button {
    width: 45px;
    height: 19px;
    border: 1px solid #888;
    border-left: 0;
    border-bottom: 0;
    background: linear-gradient(#f2f2f2, #ddd);
  }
  .tabs .active {
    z-index: 1;
    width: 61px;
    height: 21px;
    margin-bottom: -1px;
    border-left: 1px solid #888;
    background: #fff;
  }
  .panel {
    display: flex;
    flex-direction: column;
    gap: 3px;
    padding: 4px 8px 6px 9px;
    border: 1px solid #888;
    background: #fff;
  }
  fieldset {
    min-width: 0;
    margin: 0;
    padding: 0 0 2px 7px;
    border: 1px solid #ddd;
    border-radius: 3px;
  }
  legend {
    padding: 0 3px 0 0;
    line-height: 16px;
  }
  .row {
    display: flex;
    align-items: center;
    height: 28px;
  }
  .row > :first-child {
    width: 114px;
  }
  .r20 {
    height: 20px;
  }
  .r24 {
    height: 24px;
  }
  .r32 {
    height: 32px;
  }
  .r36 {
    height: 36px;
  }
  .dim {
    color: #999;
  }
  .grey {
    color: #666;
  }
  .scale {
    padding-top: 3px;
  }

  /* drop-downs: the arrow sits in the same grid cell as the select */
  .drop {
    display: grid;
    align-items: center;
    height: 20px;
  }
  .drop::after {
    content: '';
    grid-area: 1 / 1;
    justify-self: end;
    margin-right: 5px;
    border: 4px solid transparent;
    border-top-color: #000;
    border-bottom: 0;
    pointer-events: none;
  }
  .drop select {
    grid-area: 1 / 1;
    appearance: none;
    width: 100%;
    height: 100%;
    padding-left: 3px;
    border: 1px solid #707070;
    border-radius: 3px;
    background: linear-gradient(#f3f3f3, #ebebeb 9px, #dcdcdc 10px, #cfcfcf);
  }
  .drop.off::after {
    border-top-color: #999;
  }
  .drop.off select {
    border-color: #adadad;
    background: #f4f4f4;
    color: #777;
    opacity: 1;
  }
  .w108 {
    width: 108px;
  }
  .tall {
    height: 24px;
  }
  .tall select {
    padding-left: 6px;
  }
  .color select {
    padding-left: 18px;
  }
  .color::before {
    content: '';
    grid-area: 1 / 1;
    z-index: 1;
    box-sizing: border-box;
    width: 10px;
    height: 10px;
    margin-left: 5px;
    background: #0f0;
    border: 1px solid #222;
  }
  .bg-color {
    width: 38px;
    margin-left: 3px;
  }
  .bg-color svg {
    grid-area: 1 / 1;
    margin-left: 5px;
    pointer-events: none;
  }
  .edit {
    width: 93px;
  }
  .edit select {
    padding-left: 2px;
    border-radius: 0;
    border-color: #aaa #ddd #ddd;
    background: #fff;
  }
  .wide {
    width: 147px;
  }
  .ws {
    width: 174px;
    height: 22px;
    font-family: 'Noto Sans', 'Noto Sans CJK SC', sans-serif;
  }
  .ws select {
    padding-left: 8px;
    border-color: #ccc;
    background: #f6f6f6;
    color: #777;
  }
  .ws::after {
    border-top-color: #999;
    margin-right: 3px;
  }
  .row .dots {
    width: 21px;
    height: 19px;
    margin-left: 1px;
    border: 1px solid #888;
    border-radius: 3px;
    background: linear-gradient(#f5f5f5, #ddd);
    line-height: 12px;
  }
  .row .dots:disabled {
    border-color: #bbb;
    background: #f4f4f4;
  }
  .row .sample {
    width: 106px;
    height: 23px;
    padding: 1px;
    border: 1px solid #888;
    background: #2fd044;
  }
  .sample svg {
    display: block;
    background: #18332c;
  }

  label {
    display: flex;
    align-items: center;
    gap: 3px;
  }
  input[type='checkbox'] {
    appearance: none;
    flex: none;
    display: grid;
    place-items: center;
    width: 13px;
    height: 13px;
    border: 1px solid #8e8f8f;
    background: linear-gradient(135deg, #d5d9dd, #fbfbfb);
    box-shadow: inset 0 0 0 1px #f4f4f4;
  }
  input[type='checkbox']:disabled {
    border-color: #b1b1b1;
    background: #f8f8f8;
  }
  input[type='checkbox']:checked::after {
    content: '';
    width: 4px;
    height: 8px;
    margin-bottom: 2px;
    border: solid #3b4f8f;
    border-width: 0 2px 2px 0;
    transform: rotate(38deg);
  }
  input[type='radio'] {
    appearance: none;
    width: 12px;
    height: 12px;
    border: 1px solid #808488;
    border-radius: 50%;
    background: radial-gradient(#ddd, #f8f8f8);
  }
  input[type='radio']:checked {
    background: radial-gradient(#4f9cc4 1px, #173f66 3px, #e8eef2 4px);
  }
  .row .spacing {
    width: 63px;
    height: 18px;
    padding-left: 2px;
    border: 1px solid #aaa;
    background: #fff;
    color: #666;
  }
  .origin {
    padding-top: 5px;
    margin-right: 1px;
  }
  .radio {
    height: 22px;
    gap: 5px;
  }
  .given {
    display: flex;
    justify-content: space-between;
    padding: 0 31px 0 22px;
    color: #777;
  }
  .pick {
    display: flex;
    align-items: center;
    gap: 5px;
    height: 26px;
    color: #999;
  }
  .check {
    height: 20px;
  }
  .corner {
    width: 120px;
    margin: 2px 0 2px 30px;
  }
  .bricks {
    margin-top: 25px;
    fill: none;
  }
  .app .square {
    display: grid;
    place-items: center;
    width: 24px;
    height: 24px;
    border: 1px solid #777;
    border-radius: 3px;
    background: linear-gradient(#f5f5f5, #ddd);
  }
  .app .square:disabled {
    border-color: #aaa;
    background: #f4f4f4;
  }
  .app .square.focus {
    border-color: #2c7599;
    box-shadow: inset 0 0 0 1px #5ec5ee;
  }

  .bounds {
    height: 192px;
    margin-bottom: 5px;
    padding-left: 9px;
  }
  .action {
    display: flex;
    align-items: center;
    gap: 11px;
    height: 34px;
  }
  .options {
    height: 249px;
    padding: 4px 0 0 10px;
  }
  .right legend {
    margin-left: -2px;
  }
  .opt {
    height: 21px;
  }
  .caption {
    height: 22px;
    padding-top: 4px;
  }
  .transparency {
    display: flex;
    align-items: center;
    gap: 9px;
    margin-top: 9px;
  }
  .transparency .amount {
    width: 27px;
    height: 18px;
    border: 1px solid #ddd;
    background: #fff;
    text-align: center;
  }
  input[type='range'] {
    appearance: none;
    width: 109px;
    height: 18px;
    background: linear-gradient(#b5b5b5, #b5b5b5) center / 100% 1px no-repeat;
  }
  input[type='range']::-webkit-slider-thumb {
    appearance: none;
    width: 7px;
    height: 14px;
    border: 1px solid #666;
    border-radius: 2px;
    background: #eee;
  }
  .inherit {
    display: flex;
    align-items: center;
    gap: 11px;
    width: 124px;
    height: 39px;
    margin-top: 1px;
    padding-left: 7px;
    border: 3px solid #dc3c40;
  }

  .actions {
    display: flex;
    align-items: center;
    gap: 11px;
    margin-top: 10px;
    padding: 0 2px 0 1px;
  }
  .actions .push {
    width: 73px;
    height: 20px;
    border: 1px solid #707070;
    border-radius: 3px;
    background: linear-gradient(#f3f3f3, #ebebeb 9px, #dcdcdc 10px, #cfcfcf);
  }
  .actions .push:disabled {
    border-color: #adadad;
    background: #f2f2f2;
    color: #888;
  }
  .actions .preview {
    margin-right: auto;
  }
  .actions .more {
    display: grid;
    place-items: center;
    width: 20px;
    height: 20px;
    border: 2px solid #555;
    border-radius: 50%;
    background: linear-gradient(#fff, #ccc);
  }

  /* marks stamped over the picture */
  .faint-mark {
    position: absolute;
    top: 306px;
    left: 409px;
    color: rgba(190, 194, 200, 0.2);
    font: 700 36px/36px 'Liberation Sans', sans-serif;
    pointer-events: none;
  }
  .channel {
    position: absolute;
    right: 32px;
    bottom: 26px;
    display: flex;
    align-items: center;
    gap: 8px;
    color: #fafafa;
    font: 24px/36px 'Liberation Sans', 'Noto Sans CJK SC', sans-serif;
    text-shadow: 1px 1px 1px #333, 0 0 1px #555;
    pointer-events: none;
  }
  .site {
    position: absolute;
    right: 0;
    bottom: 0;
    display: flex;
    flex-direction: column;
    align-items: center;
    width: 122px;
    height: 40px;
    background: rgba(222, 226, 232, 0.85);
  }
  .site b {
    color: #2f96ee;
    font: 20px/24px 'DejaVu Sans', 'Noto Sans CJK SC', sans-serif;
  }
  .site a {
    color: #d8202a;
    font: 700 13px/16px 'DejaVu Sans', sans-serif;
    text-decoration: none;
  }
</style>
